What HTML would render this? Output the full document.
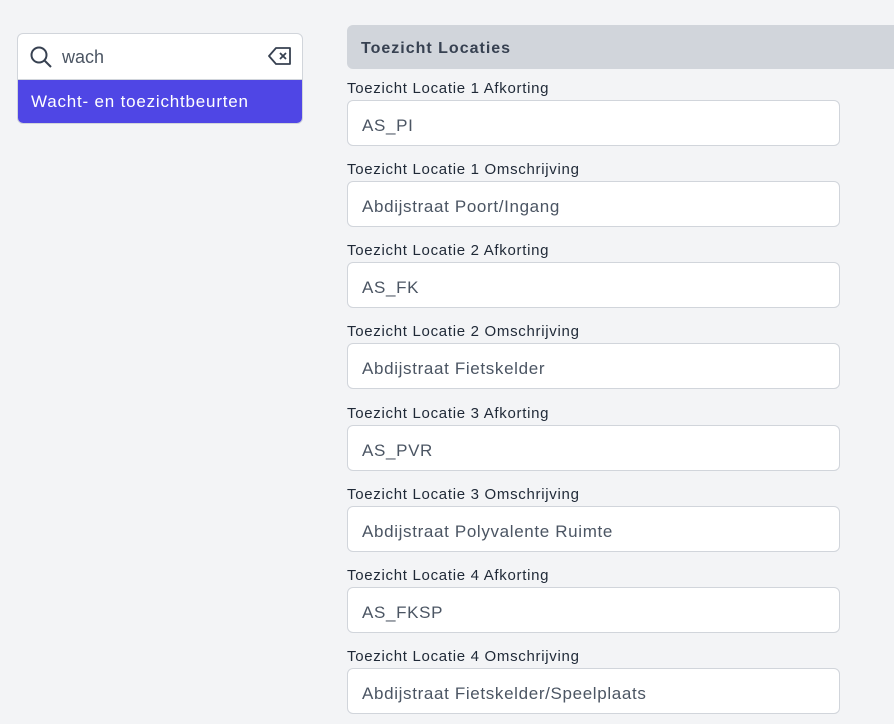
<!DOCTYPE html>
<html><head><style>
body{margin:0;width:894px;height:724px;background:#f3f4f6;font-family:"Liberation Sans",sans-serif;position:relative;overflow:hidden}
.search{position:absolute;left:17px;top:33px;width:284px;height:89px;border:1px solid #d1d5db;border-radius:6px;background:#fff;overflow:hidden}
.search .top{height:45px;border-bottom:1px solid #d1d5db;position:relative}
.search .q{position:absolute;left:44px;top:13px;font-size:18px;color:#4b5563}
.search .opt{background:#4f46e5;color:#fff;font-size:17px;letter-spacing:0.8px;height:43px;line-height:44px;padding-left:13px}
.hdr{position:absolute;left:347px;top:25px;width:560px;height:44px;background:#d1d5db;border-radius:6px;font-weight:bold;font-size:16px;letter-spacing:1px;color:#374151;line-height:47px;padding-left:14px;box-sizing:border-box}
.lbl{position:absolute;left:347px;font-size:15px;letter-spacing:0.7px;color:#1f2937}
.inp{position:absolute;left:347px;height:44px;border:1px solid #d1d5db;border-radius:6px;background:#fff;font-size:17px;letter-spacing:0.65px;color:#4b5563;line-height:49px;padding-left:14px;box-sizing:content-box;width:477px}
</style></head><body>
<div class="search"><div class="top">
<svg style="position:absolute;left:11px;top:11px" width="24" height="24" viewBox="0 0 24 24" fill="none" stroke="#374151" stroke-width="2"><circle cx="10" cy="10" r="7.5"/><path d="M15.5 15.5L22 22"/></svg>
<span class="q">wach</span>
<svg style="position:absolute;left:250px;top:12px" width="24" height="20" viewBox="0 0 24 20" fill="none" stroke="#374151" stroke-width="1.8" stroke-linejoin="round"><path d="M8 2H22V18H8L1 10Z"/><path d="M12 7l6 6M18 7l-6 6"/></svg>
</div><div class="opt">Wacht- en toezichtbeurten</div></div>
<div class="hdr">Toezicht Locaties</div>
<div class="lbl" style="top:80px">Toezicht Locatie 1 Afkorting</div><div class="inp" style="top:100px">AS_PI</div>
<div class="lbl" style="top:161px">Toezicht Locatie 1 Omschrijving</div><div class="inp" style="top:181px">Abdijstraat Poort/Ingang</div>
<div class="lbl" style="top:242px">Toezicht Locatie 2 Afkorting</div><div class="inp" style="top:262px">AS_FK</div>
<div class="lbl" style="top:323px">Toezicht Locatie 2 Omschrijving</div><div class="inp" style="top:343px">Abdijstraat Fietskelder</div>
<div class="lbl" style="top:405px">Toezicht Locatie 3 Afkorting</div><div class="inp" style="top:425px">AS_PVR</div>
<div class="lbl" style="top:486px">Toezicht Locatie 3 Omschrijving</div><div class="inp" style="top:506px">Abdijstraat Polyvalente Ruimte</div>
<div class="lbl" style="top:567px">Toezicht Locatie 4 Afkorting</div><div class="inp" style="top:587px">AS_FKSP</div>
<div class="lbl" style="top:648px">Toezicht Locatie 4 Omschrijving</div><div class="inp" style="top:668px">Abdijstraat Fietskelder/Speelplaats</div>
</body></html>
